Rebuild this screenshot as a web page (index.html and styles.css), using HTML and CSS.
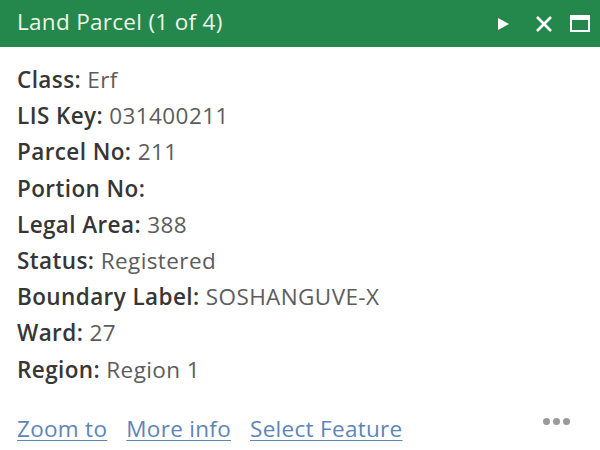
FILE: index.html
```html
<!DOCTYPE html>
<html>
<head>
<meta charset="utf-8">
<link rel="stylesheet" href="styles.css">
</head>
<body>
<div class="popup">
  <div class="header">
    <div class="title">Land Parcel (1 of 4)</div>
    <div class="actions">
      <svg class="icon play" width="14" height="14" viewBox="0 0 14 14"><path d="M2 1 L13 7 L2 13 Z" fill="#fff"/></svg>
      <svg class="icon close" width="18" height="16" viewBox="0 0 18 16"><path d="M2 1 L16 15 M16 1 L2 15" stroke="#fff" stroke-width="2.6" fill="none"/></svg>
      <svg class="icon max" width="20" height="17" viewBox="0 0 20 17"><rect x="1" y="1" width="18" height="15" fill="none" stroke="#fff" stroke-width="2"/><rect x="1" y="1" width="18" height="4" fill="#fff"/></svg>
    </div>
  </div>
  <div class="body">
    <div class="row"><span class="label">Class:</span> <span class="value">Erf</span></div>
    <div class="row"><span class="label">LIS Key:</span> <span class="value">031400211</span></div>
    <div class="row"><span class="label">Parcel No:</span> <span class="value">211</span></div>
    <div class="row"><span class="label">Portion No:</span> <span class="value"></span></div>
    <div class="row"><span class="label">Legal Area:</span> <span class="value">388</span></div>
    <div class="row"><span class="label">Status:</span> <span class="value">Registered</span></div>
    <div class="row"><span class="label">Boundary Label:</span> <span class="value">SOSHANGUVE-X</span></div>
    <div class="row"><span class="label">Ward:</span> <span class="value">27</span></div>
    <div class="row"><span class="label">Region:</span> <span class="value">Region 1</span></div>
  </div>
  <div class="footer">
    <div class="links">
      <a class="link">Zoom to</a>
      <a class="link">More info</a>
      <a class="link">Select Feature</a>
    </div>
    <div class="more"><span></span><span></span><span></span></div>
  </div>
</div>
</body>
</html>
```
FILE: styles.css
```css
html, body {
  margin: 0;
  padding: 0;
  background: #fff;
}
body {
  width: 600px;
  height: 450px;
  overflow: hidden;
  font-family: "Open Sans", "Lato", sans-serif;
}
.popup {
  width: 600px;
}
.header {
  height: 47px;
  background: #24874b;
  display: flex;
  align-items: center;
  justify-content: space-between;
  padding: 0 10px 0 17px;
  box-sizing: border-box;
}
.title {
  color: #eef6e8;
  font-size: 22.5px;
  line-height: 30px;
  margin-top: -4px;
  letter-spacing: 0.3px;
}
.actions {
  display: flex;
  align-items: center;
}
.icon { display: block; }
.play { margin-right: 25px; }
.close { margin-right: 17px; }
.body {
  padding: 15px 17px 0 17px;
}
.row {
  font-size: 22.5px;
  line-height: 36.2px;
  height: 36.2px;
  white-space: nowrap;
  letter-spacing: 0.4px;
}
.label {
  color: #363636;
  font-weight: 600;
}
.value {
  color: #5c5c5c;
}
.footer {
  display: flex;
  justify-content: space-between;
  align-items: flex-start;
  padding: 25px 30px 0 17px;
}
.links {
  display: flex;
  gap: 19px;
}
.link {
  font-size: 22.5px;
  color: #5d85b8;
  text-decoration: underline;
  text-decoration-thickness: 1px;
  text-underline-offset: 3px;
  letter-spacing: 0.3px;
}
.more {
  display: flex;
  gap: 3px;
  margin-top: 5px;
}
.more span {
  width: 7px;
  height: 7px;
  border-radius: 50%;
  background: #9a9a9a;
}
```
